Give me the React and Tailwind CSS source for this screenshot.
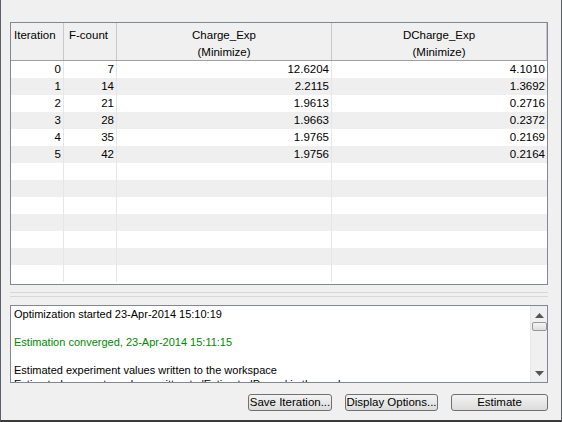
import React from 'react';

const rows = [
  { it: 0, fc: 7, a: '12.6204', b: '4.1010' },
  { it: 1, fc: 14, a: '2.2115', b: '1.3692' },
  { it: 2, fc: 21, a: '1.9613', b: '0.2716' },
  { it: 3, fc: 28, a: '1.9663', b: '0.2372' },
  { it: 4, fc: 35, a: '1.9765', b: '0.2169' },
  { it: 5, fc: 42, a: '1.9756', b: '0.2164' },
];

const emptyRows = 7;
const cols = ['w-[53px]', 'w-[53px]', 'w-[215px]', 'w-[215px]'];

const Cell = ({ width, children, last }) => (
  <div className={`${width} shrink-0 h-full text-right pr-[2px] ${last ? '' : 'border-r border-[#e6e6e6]'}`}>
    {children}
  </div>
);

const Button = ({ width, children }) => (
  <button className={`${width} h-[17px] px-0 whitespace-nowrap rounded-[3px] border border-[#707070] bg-gradient-to-b from-[#f3f3f3] to-[#dcdcdc] text-[11.5px] leading-[15px] text-black`}>
    {children}
  </button>
);

const App = () => {
  const all = [...rows, ...Array.from({ length: emptyRows }, () => null)];
  return (
    <div
      className="w-[562px] h-[422px] bg-[#f0f0f0] border-l border-r border-[#59606b] border-b-2 border-b-[#3a3a3a] flex flex-col pl-[9px] pr-[13px] pt-[22px] text-black"
      style={{ fontFamily: '"Liberation Sans", Arial, sans-serif' }}
    >
      {/* results table */}
      <div className="h-[263px] border border-[#828790] bg-white flex flex-col text-[11.5px]">
        <div className="h-[38px] shrink-0 flex bg-[#f0f0f0] border-b border-[#a0a0a0]">
          <div className="w-[53px] shrink-0 border-r border-[#c8c8c8] pl-[3px] pt-[4px] leading-[17px]">Iteration</div>
          <div className="w-[53px] shrink-0 border-r border-[#c8c8c8] pl-[5px] pt-[4px] leading-[17px]">F-count</div>
          <div className="w-[215px] shrink-0 border-r border-[#c8c8c8] text-center pt-[4px] leading-[17px]">
            <div>Charge_Exp</div>
            <div>(Minimize)</div>
          </div>
          <div className="w-[215px] shrink-0 border-r border-[#c8c8c8] text-center pt-[4px] leading-[17px]">
            <div>DCharge_Exp</div>
            <div>(Minimize)</div>
          </div>
        </div>
        {all.map((r, i) => (
          <div
            key={i}
            className={`h-[17px] shrink-0 flex leading-[17px] ${i % 2 === 0 ? 'bg-white' : 'bg-[#efefef]'}`}
          >
            <Cell width={cols[0]}>{r ? r.it : ''}</Cell>
            <Cell width={cols[1]}>{r ? r.fc : ''}</Cell>
            <Cell width={cols[2]}>{r ? r.a : ''}</Cell>
            <Cell width={cols[3]} last>{r ? r.b : ''}</Cell>
          </div>
        ))}
      </div>

      {/* splitter */}
      <div className="mt-[7px] h-[5px] border-t border-b border-[#d7d7d7]" />

      {/* log */}
      <div className="mt-[8px] h-[78px] border border-[#828790] bg-white flex overflow-hidden text-[11px] leading-[14px]">
        <div className="flex-1 pl-[3px] pt-[1px] overflow-hidden whitespace-nowrap">
          <div>Optimization started 23-Apr-2014 15:10:19</div>
          <div>&nbsp;</div>
          <div className="text-[#008a00]">Estimation converged, 23-Apr-2014 15:11:15</div>
          <div>&nbsp;</div>
          <div>Estimated experiment values written to the workspace</div>
          <div>Estimated parameter values written to 'EstimatedParam' in the workspace</div>
        </div>
        <div className="w-[17px] shrink-0 bg-[#f0f0f0] border-l border-[#e6e6e6] flex flex-col items-center">
          <svg width="9" height="5" viewBox="0 0 9 5" className="mt-[7px]">
            <path d="M0 5 L4.5 0 L9 5 Z" fill="#555" />
          </svg>
          <div className="mt-[4px] w-[15px] h-[9px] rounded-[2px] border border-[#979797] bg-gradient-to-b from-[#f5f5f5] to-[#dedede]" />
          <div className="flex-1" />
          <svg width="9" height="5" viewBox="0 0 9 5" className="mb-[6px]">
            <path d="M0 0 L9 0 L4.5 5 Z" fill="#555" />
          </svg>
        </div>
      </div>

      {/* buttons */}
      <div className="mt-[11px] flex justify-end gap-[13px]">
        <Button width="w-[84px]">Save Iteration...</Button>
        <Button width="w-[93px]">Display Options...</Button>
        <Button width="w-[97px]">Estimate</Button>
      </div>
    </div>
  );
};

export default App;
